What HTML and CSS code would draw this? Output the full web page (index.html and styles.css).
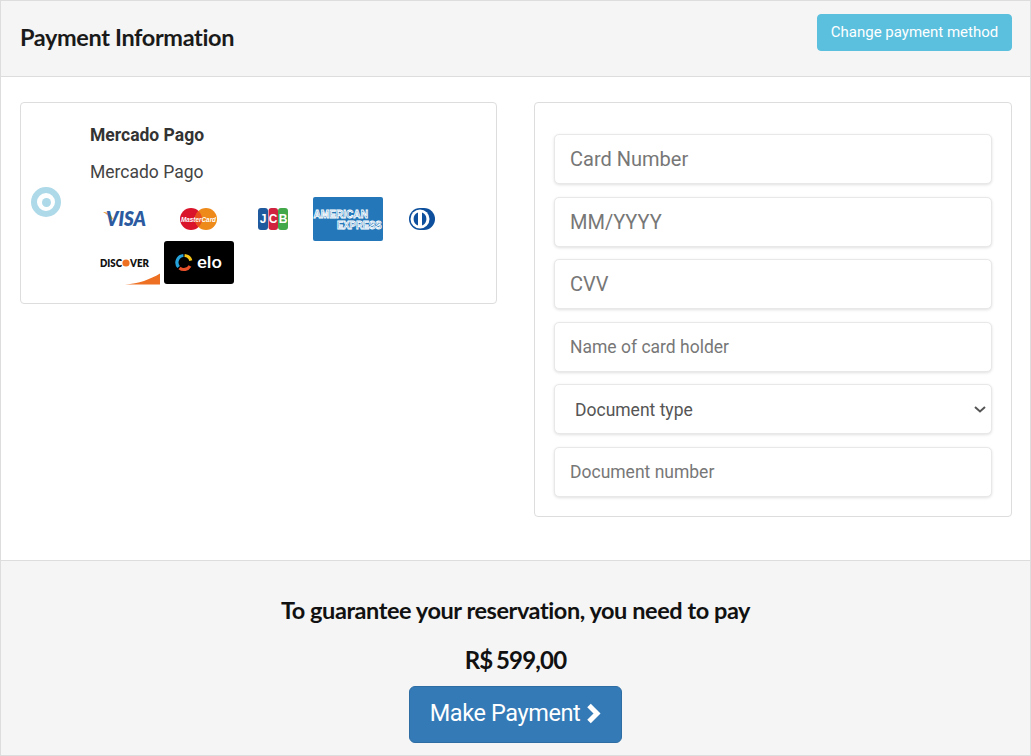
FILE: index.html
```html
<!DOCTYPE html>
<html lang="en">
<head>
<meta charset="utf-8">
<title>Payment Information</title>
<link rel="stylesheet" href="styles.css">
</head>
<body>
<div class="panel">
  <header class="panel-head">
    <h1 class="title">Payment Information</h1>
    <button class="btn-change" type="button">Change payment method</button>
  </header>
  <main class="panel-body">
    <section class="method-card">
      <div class="radio-col"><span class="radio"></span></div>
      <div class="method-info">
        <div class="method-name">Mercado Pago</div>
        <div class="method-sub">Mercado Pago</div>
        <div class="logos">
          <svg class="logo" viewBox="0 0 70 44"><path d="M13 15c5 0 8 2 10 7l-2 1c-1-3-4-6-8-8z" fill="#e8a33d"/><text x="16" y="29" textLength="40" lengthAdjust="spacingAndGlyphs" class="t-visa">VISA</text></svg>
          <svg class="logo" viewBox="0 0 70 44"><circle cx="27" cy="22" r="11" fill="#d9142b"/><circle cx="42" cy="22" r="11" fill="#ee8a1a"/><path d="M34.500 14a11 11 0 0 1 0 16a11 11 0 0 1 0-16z" fill="#e8501f"/><text x="17" y="24.500" textLength="35" lengthAdjust="spacingAndGlyphs" class="t-mc">MasterCard</text></svg>
          <svg class="logo" viewBox="0 0 70 44"><rect x="20" y="11" width="10" height="22" rx="3" fill="#1f5a9e"/><rect x="30.500" y="11" width="9.500" height="22" rx="3" fill="#cf2340"/><rect x="40" y="11" width="10" height="22" rx="3" fill="#43a849"/><text x="25" y="26" class="t-jcb">J</text><text x="35" y="26" class="t-jcb">C</text><text x="45" y="26" class="t-jcb">B</text></svg>
          <svg class="logo logo-amex" viewBox="0 0 70 44"><rect width="70" height="44" rx="2" fill="#2478ba"/><text transform="translate(0.500 20.500) scale(.92 1)" class="t-amex">AMERICAN</text><text transform="translate(24 32) scale(.86 1)" class="t-amex">EXPRESS</text></svg>
          <svg class="logo" viewBox="0 0 70 44"><path d="M34 11h4a11 11 0 0 1 0 22h-4a11 11 0 0 1 0-22z" fill="#0d4f9c"/><circle cx="34" cy="22" r="9.500" fill="#fff"/><path d="M32 15.500v13a7 7 0 0 1 0-13zM36 15.500a7 7 0 0 1 0 13z" fill="#0d4f9c"/></svg>
          <svg class="logo" viewBox="0 0 70 44"><text x="10" y="26" textLength="22" lengthAdjust="spacingAndGlyphs" class="t-disc">DISC</text><circle cx="36" cy="22" r="3.600" fill="#ee7023"/><text x="40" y="26" textLength="19" lengthAdjust="spacingAndGlyphs" class="t-disc">VER</text><path d="M35 43.500c14-1 25-5 35-11v11z" fill="#ee7023"/></svg>
          <svg class="logo" viewBox="0 0 70 44"><rect width="70" height="43" rx="3" fill="#000"/><g fill="none" stroke-width="3.200"><path d="M20.600 14.500a7 7 0 0 1 6.200 5.200" stroke="#f5c518"/><path d="M26 25a7 7 0 0 1-10.500 1.900" stroke="#e8502a"/><path d="M14.600 26a7 7 0 0 1 4.800-11.500" stroke="#27a3dc"/></g><text x="33" y="27" textLength="25" lengthAdjust="spacingAndGlyphs" class="t-elo">elo</text></svg>
        </div>
      </div>
    </section>
    <form class="card-form">
      <input class="field big" type="text" placeholder="Card Number">
      <input class="field big" type="text" placeholder="MM/YYYY">
      <input class="field big" type="text" placeholder="CVV">
      <input class="field" type="text" placeholder="Name of card holder">
      <div class="select-wrap">
        <select class="field select"><option>Document type</option></select>
        <svg class="select-arrow" viewBox="0 0 12 7"><path d="M1 1l5 4.500L11 1" fill="none" stroke="#555" stroke-width="2"/></svg>
      </div>
      <input class="field" type="text" placeholder="Document number">
    </form>
  </main>
  <footer class="panel-foot">
    <h2 class="notice">To guarantee your reservation, you need to pay</h2>
    <div class="amount">R$ 599,00</div>
    <button class="btn-pay" type="button">Make Payment
      <svg class="chev" viewBox="0 0 15 21"><path d="M3 2.500l8 8-8 8" fill="none" stroke="#fff" stroke-width="5"/></svg>
    </button>
  </footer>
</div>
</body>
</html>
```
FILE: styles.css
```css
* { box-sizing: border-box; }
html, body { margin: 0; padding: 0; background: #fff; }
body { font-family: Roboto, "Liberation Sans", sans-serif; color: #333; }
.panel { width: 1031px; height: 756px; border: 1px solid #ddd; display: flex; flex-direction: column; }
.panel-head { height: 76px; flex: none; background: #f5f5f5; border-bottom: 1px solid #ddd; display: flex; justify-content: space-between; align-items: flex-start; padding: 13px 18px 0 19px; }
.title { margin: 7px 0 0; font: 700 23.500px/32px Lato, sans-serif; letter-spacing: -.37px; color: #1a1a1a; }
.btn-change { height: 37px; width: 195px; border: 1px solid #5bc0de; border-radius: 4px; background: #5bc0de; color: #fff; font: 400 15px/20px Roboto, sans-serif; padding: 0 0 1px; }
.panel-body { flex: 1; display: flex; align-items: flex-start; justify-content: space-between; padding: 25px 18px 0 19px; }
.method-card { width: 477px; height: 202px; border: 1px solid #ddd; border-radius: 4px; display: flex; }
.radio-col { width: 69px; flex: none; display: flex; align-items: center; padding: 0 0 2px 10px; }
.radio { width: 30px; height: 30px; border-radius: 50%; border: 6px solid #aed9e8; display: flex; align-items: center; justify-content: center; background: #fff; }
.radio::before { content: ""; width: 9px; height: 9px; border-radius: 50%; background: #aed9e8; }
.method-info { flex: 1; padding-top: 21px; }
.method-name { font-size: 17.500px; font-weight: 700; line-height: 22px; color: #333; }
.method-sub { font-size: 17.500px; line-height: 24px; margin-top: 14px; color: #444; }
.logos { display: flex; flex-wrap: wrap; width: 375px; margin-top: 13px; }
.logo { width: 70px; height: 44px; display: block; margin-right: 4px; }
.logo-amex { margin-left: 1px; margin-right: 3px; }
.t-visa { font: italic 800 20px Lato, "Liberation Sans", sans-serif; fill: #2b5aa0; }
.t-mc { font: italic 700 8px "Liberation Sans", sans-serif; fill: #fff; }
.t-jcb { font: 700 12px "Liberation Sans", sans-serif; fill: #fff; text-anchor: middle; }
.t-amex { font: 700 11px "Liberation Sans", sans-serif; fill: #2478ba; stroke: #fff; stroke-width: .9px; }
.t-disc { font: 800 11px Lato, "Liberation Sans", sans-serif; fill: #111; }
.t-elo { font: 500 16px Roboto, sans-serif; fill: #fff; }
.card-form { width: 478px; height: 415px; border: 1px solid #ddd; border-radius: 4px; padding: 31px 19px 0; display: flex; flex-direction: column; gap: 12.500px; }
.field { display: block; flex: none; width: 100%; height: 50px; background: #fff; border: 1px solid #e8e8e8; border-radius: 5px; box-shadow: 0 1px 3px rgba(0,0,0,.12); padding: 0 15px; font: 400 17.500px Roboto, sans-serif; color: #555; outline: none; }
.field.big { font-size: 20px; }
.field::placeholder { color: #777; opacity: 1; }
.select-wrap { position: relative; flex: none; }
.select { appearance: none; -webkit-appearance: none; padding: 2px 30px 0 20px; }
.select-arrow { position: absolute; right: 6px; top: 22px; width: 12px; height: 7px; pointer-events: none; }
.panel-foot { height: 195px; flex: none; background: #f5f5f5; border-top: 1px solid #ddd; display: flex; flex-direction: column; align-items: center; padding-top: 34px; }
.notice { margin: 0; font: 700 23.500px/30px Lato, sans-serif; letter-spacing: -.43px; color: #111; }
.amount { margin-top: 20px; font: 700 24px/30px Lato, sans-serif; letter-spacing: -.8px; word-spacing: -1.500px; color: #111; }
.btn-pay { margin-top: 11px; width: 213px; height: 57px; border: 1px solid #2e6da4; border-radius: 6px; background: #337ab7; color: #fff; font: 400 23.500px/30px Roboto, sans-serif; letter-spacing: -.4px; display: flex; align-items: center; justify-content: center; gap: 6px; padding: 0 0 3px; }
.chev { width: 15px; height: 21px; }
```
